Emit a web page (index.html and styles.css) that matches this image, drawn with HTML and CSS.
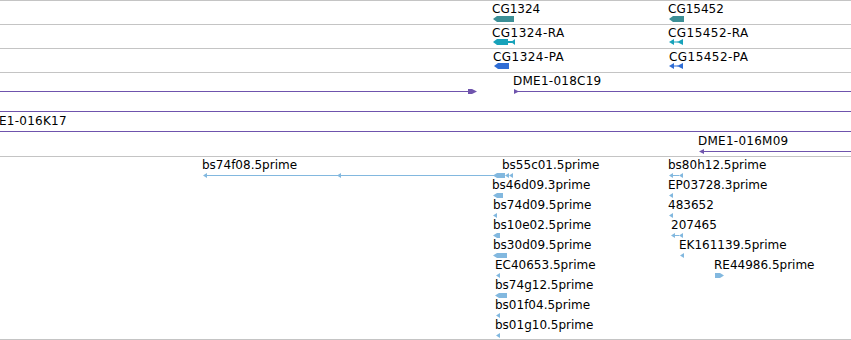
FILE: index.html
```html
<!DOCTYPE html>
<html lang="en">
<head>
  <meta charset="UTF-8">
  <title>Track view</title>
  <link rel="stylesheet" href="styles.css">
</head>
<body>
  <div class="view">

    <!-- gene -->
    <div class="track gene">
      <svg viewBox="0 1 851 23" width="851" height="23">
        <text class="lbl" x="492" y="13">CG1324</text>
        <polygon class="gene-fill" points="493,19 497,16 514,16 514,22 497,22"/>
        <text class="lbl" x="668" y="13">CG15452</text>
        <polygon class="gene-fill" points="669,19 673,16 684,16 684,22 673,22"/>
      </svg>
    </div>

    <!-- transcript -->
    <div class="track gene">
      <svg viewBox="0 25 851 23" width="851" height="23">
        <text class="lbl wide" x="492" y="37">CG1324-RA</text>
        <g class="rna-fill">
          <polygon points="493,42 497,39 508,39 508,45 497,45"/>
          <rect x="508" y="41" width="4" height="2"/>
          <polygon points="511,42 515,39 515,45"/>
        </g>
        <text class="lbl wide" x="668" y="37">CG15452-RA</text>
        <g class="rna-fill">
          <polygon points="669,42 674,39 674,45"/>
          <rect x="674" y="41.5" width="4" height="1"/>
          <polygon points="677,42 683,39 683,45"/>
        </g>
      </svg>
    </div>

    <!-- protein -->
    <div class="track gene">
      <svg viewBox="0 49 851 23" width="851" height="23">
        <text class="lbl wide" x="493" y="61">CG1324-PA</text>
        <polygon class="pep-fill" points="494,66 498,63 509,63 509,69 498,69"/>
        <text class="lbl wide" x="669" y="61">CG15452-PA</text>
        <g class="pep-fill">
          <polygon points="669,66 674,63 674,69"/>
          <rect x="674" y="65.5" width="4" height="1"/>
          <polygon points="677,66 683,63 683,69"/>
        </g>
      </svg>
    </div>

    <!-- clones -->
    <div class="track clone">
      <svg viewBox="0 73 851 83" width="851" height="83">
        <g class="clone-fill">
          <rect x="0" y="91" width="472" height="1"/>
          <polygon points="468,89 472,89 477,91.5 472,94 468,94"/>
          <text class="lbl narrow" x="513" y="85">DME1-018C19</text>
          <polygon points="514,89 519,91.5 514,94"/>
          <rect x="514" y="91" width="337" height="1"/>

          <rect x="0" y="111" width="851" height="1"/>

          <text class="lbl narrow" x="-1" y="125">E1-016K17</text>
          <rect x="0" y="131" width="851" height="1"/>

          <text class="lbl narrow" x="698" y="145">DME1-016M09</text>
          <polygon points="699,151.5 704,149 704,154"/>
          <rect x="702" y="151" width="149" height="1"/>
        </g>
      </svg>
    </div>

    <!-- est -->
    <div class="track est">
      <svg viewBox="0 157 851 182" width="851" height="182">
        <g class="est-fill">
          <text class="lbl" x="202" y="169">bs74f08.5prime</text>
          <rect x="205" y="175" width="290" height="1"/>
          <polygon points="203,175.5 207,173 207,178"/>
          <polygon points="337,175.5 341,173 341,178"/>
          <polygon points="493,175.5 497,173 505,173 505,178 497,178"/>
          <polygon points="505,175.5 509,173 509,178"/>
          <polygon points="509,175.5 513,173 513,178"/>
          <text class="lbl" x="502" y="169">bs55c01.5prime</text>
          <text class="lbl" x="668" y="169">bs80h12.5prime</text>
          <polygon points="669,175.5 673,173 673,178"/>
          <rect x="673" y="175" width="6" height="1"/>
          <polygon points="679,175.5 683,173 683,178"/>

          <text class="lbl" x="492" y="189">bs46d09.3prime</text>
          <polygon points="493,195.5 497,193 503,193 503,198 497,198"/>
          <text class="lbl" x="668" y="189">EP03728.3prime</text>
          <polygon points="669,195.5 673,193 673,198"/>

          <text class="lbl" x="493" y="209">bs74d09.5prime</text>
          <polygon points="493,215.5 497,213 497,218"/>
          <text class="lbl" x="668" y="209">483652</text>
          <polygon points="669,215.5 673,213 673,218"/>

          <text class="lbl" x="493" y="229">bs10e02.5prime</text>
          <polygon points="493,235.5 497,233 500,233 500,238 497,238"/>
          <text class="lbl" x="671" y="229">207465</text>
          <polygon points="671,235.5 675,233 675,238"/>
          <rect x="675" y="235" width="4" height="1"/>
          <polygon points="679,235.5 683,233 683,238"/>

          <text class="lbl" x="493" y="249">bs30d09.5prime</text>
          <polygon points="493,255.5 497,253 507,253 507,258 497,258"/>
          <text class="lbl" x="679" y="249">EK161139.5prime</text>
          <polygon points="680,255.5 684,253 684,258"/>

          <text class="lbl" x="495" y="269">EC40653.5prime</text>
          <polygon points="496,275.5 500,273 500,278"/>
          <text class="lbl" x="714" y="269">RE44986.5prime</text>
          <polygon points="715,273 720,273 724,275.5 720,278 715,278"/>

          <text class="lbl" x="495" y="289">bs74g12.5prime</text>
          <polygon points="495,295.5 499,293 507,293 507,298 499,298"/>

          <text class="lbl" x="495" y="309">bs01f04.5prime</text>
          <polygon points="496,315.5 500,313 500,318"/>

          <text class="lbl" x="495" y="329">bs01g10.5prime</text>
          <polygon points="496,335.5 500,333 500,338"/>
        </g>
      </svg>
    </div>

  </div>
</body>
</html>
```

FILE: styles.css
```css
:root {
  --rule: #c4c4c4;
  --gene: #3b8f96;
  --rna: #17a2ba;
  --pep: #2f6dd5;
  --clone: #6f54ad;
  --est: #82b8df;
}

body {
  margin: 0;
  background: #fff;
}

.view {
  width: 851px;
  border-top: 1px solid var(--rule);
  overflow: hidden;
}

.track {
  border-bottom: 1px solid var(--rule);
}

.track svg {
  display: block;
}

.gene {
  height: 23px;
}

.clone {
  height: 83px;
}

.est {
  height: 182px;
}

.lbl {
  font-family: "DejaVu Sans", sans-serif;
  font-size: 12px;
  fill: #000;
}

/* hyphenated names come out a bit wider in the source view */
.lbl.wide {
  letter-spacing: 0.45px;
}

.lbl.narrow {
  letter-spacing: 0.25px;
}

.gene-fill {
  fill: var(--gene);
}

.rna-fill {
  fill: var(--rna);
}

.pep-fill {
  fill: var(--pep);
}

.clone-fill {
  fill: var(--clone);
}

.est-fill {
  fill: var(--est);
}

.clone-fill .lbl,
.est-fill .lbl {
  fill: #000;
}
```
